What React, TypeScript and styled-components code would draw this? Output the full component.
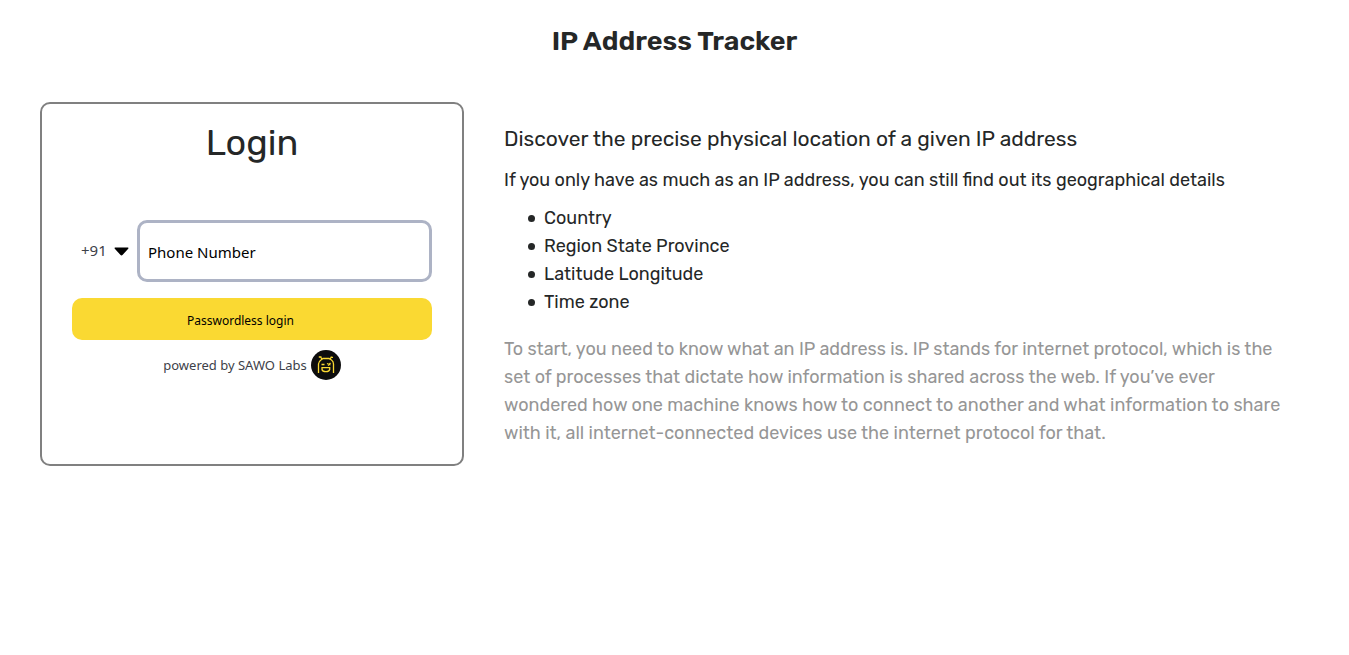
import React from "react";
import styled, { createGlobalStyle } from "styled-components";

const GlobalStyle = createGlobalStyle`
  * { box-sizing: border-box; }
  body {
    margin: 0;
    background: #fff;
    color: #252727;
    font-family: Rubik, Roboto, sans-serif;
    font-size: 18px;
    line-height: 28px;
  }
`;

const uiFont = `"Segoe UI", "Noto Sans", sans-serif`;

const PageTitle = styled.h1`
  margin: 0;
  padding: 20px 40px;
  font-size: 27px;
  font-weight: 600;
  line-height: 42px;
  text-align: center;
`;

const Main = styled.main`
  display: grid;
  grid-template-columns: minmax(0, 424fr) minmax(0, 805fr);
  align-items: start;
  gap: 40px;
  padding: 20px 40px;
`;

const LoginCard = styled.section`
  min-height: 364px;
  padding: 14px 30px;
  border: 2px solid #808080;
  border-radius: 10px;
`;

const LoginTitle = styled.h2`
  margin: 0;
  font-size: 36px;
  font-weight: 400;
  line-height: 50px;
  text-align: center;
`;

const Form = styled.form`
  display: flex;
  flex-direction: column;
  gap: 16px;
  margin-top: 52px;
  font-family: ${uiFont};
`;

const PhoneRow = styled.div`
  display: flex;
  align-items: center;
`;

const CodePicker = styled.label`
  display: flex;
  flex: none;
  align-items: center;
  gap: 5px;
  width: 65px;
  padding-left: 9px;
`;

const CodeSelect = styled.select`
  appearance: none;
  width: 28px;
  padding: 0 0 2px;
  border: 0;
  background: none;
  color: #3d4149;
  font: 15px/24px ${uiFont};
`;

const PhoneInput = styled.input`
  flex: 1;
  min-width: 0;
  height: 62px;
  padding: 2px 8px 0;
  border: 3px solid #adb3c5;
  border-radius: 10px;
  background: #fff;
  font: 15px/24px ${uiFont};

  &::placeholder { color: #000; opacity: 1; }
`;

const SubmitButton = styled.button`
  height: 42px;
  padding: 4px 31px 0 8px;
  border: 0;
  border-radius: 10px;
  background: #fad932;
  color: #000;
  font: 12px/20px ${uiFont};
`;

const PoweredBy = styled.p`
  display: flex;
  align-items: center;
  justify-content: center;
  gap: 4px;
  margin: 10px 0 0;
  color: #3d4149;
  font: 13px/20px ${uiFont};
`;

const Info = styled.article`
  padding: 22px 20px 0 0;
`;

const Heading = styled.h2`
  margin: 0 0 12px;
  font-size: 21px;
  font-weight: 400;
  line-height: 30px;
`;

const Lead = styled.p`
  margin: 0;
`;

const Details = styled.ul`
  margin: 10px 0 19px;
  padding-left: 24px;
  list-style: none;
`;

const Detail = styled.li`
  display: flex;
  align-items: center;
  gap: 9px;

  &::before {
    content: "";
    width: 7px;
    height: 7px;
    border-radius: 50%;
    background: currentColor;
  }
`;

const Explanation = styled.p`
  margin: 0;
  color: #969696;
`;

const Caret = () => (
  <svg width="15" height="9" viewBox="0 0 15 9" aria-hidden="true">
    <path d="M1 0.5H14Q15 1 14.2 1.8L8.7 7.8Q7.5 9 6.3 7.8L0.8 1.8Q0 1 1 0.5Z" />
  </svg>
);

const SawoLogo = () => (
  <svg width="30" height="30" viewBox="0 0 30 30" role="img" aria-label="SAWO">
    <circle cx="15" cy="15" r="15" fill="#0d0d0d" />
    <g fill="none" stroke="#fad932" strokeWidth="1.3">
      <path d="M7.5 23V14C7.5 11.5 9 10.5 10.5 9.5L12 8.5H18L20.5 10C22 11 22.5 12.5 22.5 14V23" />
      <path d="M11 9.5L9.5 6.5M7.8 7H10.5M19 9.5L20.5 6.5M19.8 7.3H22" />
      <path d="M10.5 14.5H13.5M16 13.5L19.5 15M17 15.5L19.5 13" />
      <path d="M11 17.7H18.7V19.5Q18 21.7 15 21.7Q11.5 21.7 11 19.5Z" />
    </g>
  </svg>
);

export default function App() {
  return (
    <>
      <GlobalStyle />
      <PageTitle>IP Address Tracker</PageTitle>
      <Main>
        <LoginCard>
          <LoginTitle>Login</LoginTitle>
          <Form onSubmit={(e) => e.preventDefault()}>
            <PhoneRow>
              <CodePicker>
                <CodeSelect aria-label="Country code" defaultValue="+91">
                  <option>+91</option>
                </CodeSelect>
                <Caret />
              </CodePicker>
              <PhoneInput type="tel" aria-label="Phone Number" placeholder="Phone Number" />
            </PhoneRow>
            <SubmitButton type="submit">Passwordless login</SubmitButton>
          </Form>
          <PoweredBy>
            powered by SAWO Labs
            <SawoLogo />
          </PoweredBy>
        </LoginCard>
        <Info>
          <Heading>Discover the precise physical location of a given IP address</Heading>
          <Lead>If you only have as much as an IP address, you can still find out its geographical details</Lead>
          <Details>
            <Detail>Country</Detail>
            <Detail>Region State Province</Detail>
            <Detail>Latitude Longitude</Detail>
            <Detail>Time zone</Detail>
          </Details>
          <Explanation>
            To start, you need to know what an IP address is. IP stands for internet protocol, which is the set of
            processes that dictate how information is shared across the web. If you’ve ever wondered how one machine
            knows how to connect to another and what information to share with it, all internet-connected devices use
            the internet protocol for that.
          </Explanation>
        </Info>
      </Main>
    </>
  );
}
